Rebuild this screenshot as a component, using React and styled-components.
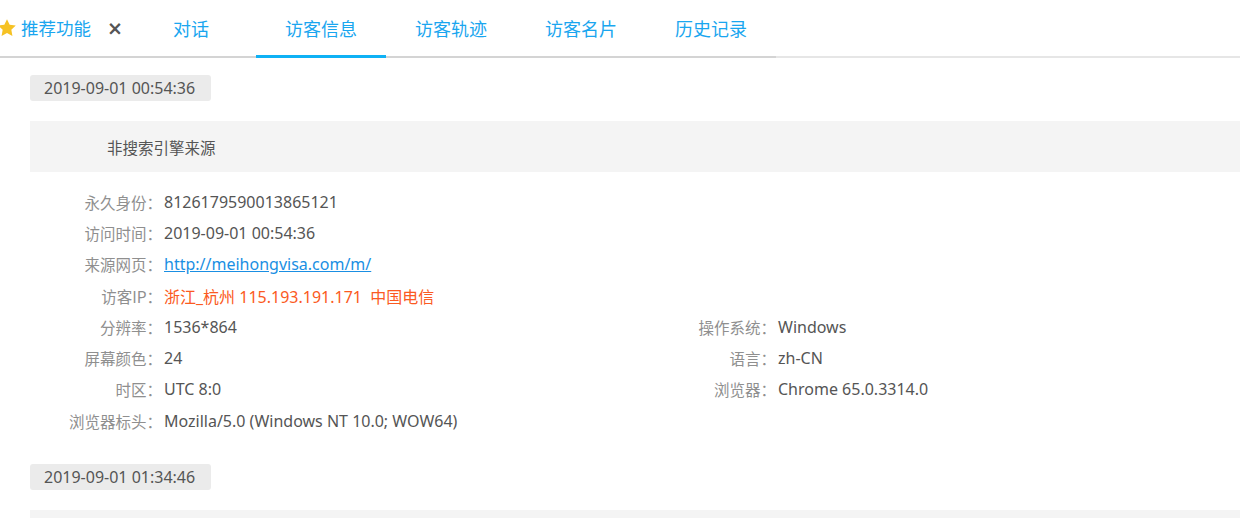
import React from "react";
import styled, { createGlobalStyle } from "styled-components";

const Global = createGlobalStyle`
  html, body { margin: 0; padding: 0; background: #fff; overflow: hidden; }
  body { font-family: "Noto Sans", "Noto Sans CJK SC", sans-serif; width: 1240px; height: 518px; }
  * { box-sizing: border-box; }
`;

const Page = styled.div`
  height: 518px;
  overflow: hidden;
`;

const TabBar = styled.div`
  display: flex;
  height: 58px;
  border-bottom: 2px solid #e6e6e6;
`;

const Tabs = styled.div`
  display: flex;
  height: 58px;
  border-bottom: 2px solid #d4d4d4;
  margin-bottom: -2px;
`;

const FirstTab = styled.div`
  display: flex;
  align-items: center;
  width: 126px;
  padding-bottom: 1px;
  color: #1aa6ef;
  font-size: 17.5px;
  font-family: "Noto Sans CJK SC", sans-serif;
`;

const StarIcon = styled.svg`
  width: 20px;
  height: 20px;
  margin-left: -3px;
  margin-right: 4px;
  flex: none;
`;

const Close = styled.span`
  margin-left: 16px;
  color: #555;
  font-size: 19px;
  font-weight: bold;
  font-family: "DejaVu Sans", sans-serif;
`;

const Tab = styled.div`
  width: 130px;
  display: flex;
  align-items: center;
  justify-content: center;
  color: #1aa6ef;
  font-size: 18px;
  font-family: "Noto Sans CJK SC", sans-serif;
  padding-bottom: 1px;
  border-bottom: 3px solid ${(p) => (p.$active ? "#0fb1f5" : "transparent")};
  margin-bottom: -2px;
  padding-top: 2px;
`;

const Content = styled.div`
  padding: 17px 0 0 30px;
`;

const Section = styled.div`
  margin-bottom: 28px;
`;

const Stamp = styled.div`
  display: inline-block;
  width: 181px;
  height: 26px;
  line-height: 26px;
  padding-left: 14px;
  background: #ebebeb;
  border-radius: 3px;
  color: #555;
  font-size: 16px;
`;

const Source = styled.div`
  margin-top: 20px;
  height: 51px;
  background: #f4f4f4;
  display: flex;
  align-items: center;
  padding-left: 77px;
  color: #555;
  font-size: 15.5px;
  font-family: "Noto Sans CJK SC", sans-serif;
`;

const Grid = styled.div`
  display: grid;
  grid-template-columns: 614px 1fr;
  margin-top: 14px;
`;

const Row = styled.div`
  display: flex;
  align-items: center;
  height: 31.3px;
  grid-column: ${(p) => (p.$full ? "1 / -1" : "auto")};
  font-size: 16px;
`;

const Label = styled.span`
  width: 132px;
  margin-right: 2px;
  text-align: right;
  color: #8f8f8f;
  font-family: "Noto Sans CJK SC", sans-serif;
  font-size: 15.5px;
  white-space: nowrap;
`;

const Value = styled.span`
  color: ${(p) => p.$color || "#555"};
  white-space: nowrap;
`;

const Link = styled.a`
  color: #1a8fe3;
  text-decoration: underline;
`;

const Star = () => (
  <StarIcon viewBox="0 0 24 24">
    <path
      d="M12 1.5l3.2 6.6 7.3 1-5.3 5.1 1.3 7.3L12 18l-6.5 3.5 1.3-7.3-5.3-5.1 7.3-1z"
      fill="#f6c224"
    />
  </StarIcon>
);

const first = {
  time: "2019-09-01 00:54:36",
  source: "非搜索引擎来源",
};

export default function App() {
  return (
    <Page lang="zh-CN">
      <Global />
      <TabBar>
        <Tabs>
          <FirstTab>
            <Star />
            推荐功能
            <Close>×</Close>
          </FirstTab>
          <Tab>对话</Tab>
          <Tab $active>访客信息</Tab>
          <Tab>访客轨迹</Tab>
          <Tab>访客名片</Tab>
          <Tab>历史记录</Tab>
        </Tabs>
      </TabBar>
      <Content>
        <Section>
          <Stamp>{first.time}</Stamp>
          <Source>{first.source}</Source>
          <Grid>
            <Row $full>
              <Label>永久身份：</Label>
              <Value>8126179590013865121</Value>
            </Row>
            <Row $full>
              <Label>访问时间：</Label>
              <Value>2019-09-01 00:54:36</Value>
            </Row>
            <Row $full>
              <Label>来源网页：</Label>
              <Link href="#">http://meihongvisa.com/m/</Link>
            </Row>
            <Row $full>
              <Label>访客IP：</Label>
              <Value $color="#fb5a22">浙江_杭州 115.193.191.171&nbsp;&nbsp;中国电信</Value>
            </Row>
            <Row>
              <Label>分辨率：</Label>
              <Value>1536*864</Value>
            </Row>
            <Row>
              <Label>操作系统：</Label>
              <Value>Windows</Value>
            </Row>
            <Row>
              <Label>屏幕颜色：</Label>
              <Value>24</Value>
            </Row>
            <Row>
              <Label>语言：</Label>
              <Value>zh-CN</Value>
            </Row>
            <Row>
              <Label>时区：</Label>
              <Value>UTC 8:0</Value>
            </Row>
            <Row>
              <Label>浏览器：</Label>
              <Value>Chrome 65.0.3314.0</Value>
            </Row>
            <Row $full>
              <Label>浏览器标头：</Label>
              <Value>Mozilla/5.0 (Windows NT 10.0; WOW64)</Value>
            </Row>
          </Grid>
        </Section>
        <Section>
          <Stamp>2019-09-01 01:34:46</Stamp>
          <Source />
        </Section>
      </Content>
    </Page>
  );
}
